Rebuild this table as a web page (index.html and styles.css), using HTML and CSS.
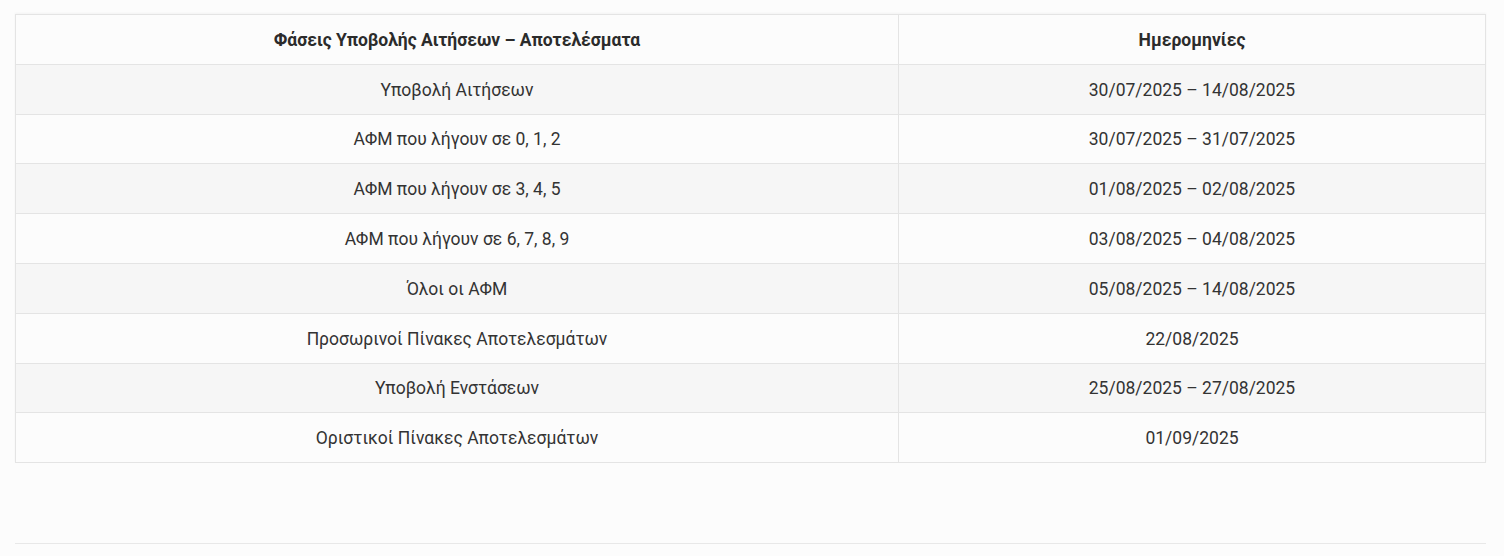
FILE: index.html
```html
<!DOCTYPE html>
<html lang="el">
<head>
    <meta charset="UTF-8">
    <meta name="viewport" content="width=device-width, initial-scale=1.0">
    <title>Φάσεις Υποβολής Αιτήσεων</title>
    <link rel="stylesheet" href="styles.css">
</head>
<body>

    <div class="content">
        <table class="phases">
            <thead>
                <tr>
                    <th class="col-phase">Φάσεις Υποβολής Αιτήσεων – Αποτελέσματα</th>
                    <th>Ημερομηνίες</th>
                </tr>
            </thead>
            <tbody>
                <tr><td>Υποβολή Αιτήσεων</td><td>30/07/2025 – 14/08/2025</td></tr>
                <tr><td>ΑΦΜ που λήγουν σε 0, 1, 2</td><td>30/07/2025 – 31/07/2025</td></tr>
                <tr><td>ΑΦΜ που λήγουν σε 3, 4, 5</td><td>01/08/2025 – 02/08/2025</td></tr>
                <tr><td>ΑΦΜ που λήγουν σε 6, 7, 8, 9</td><td>03/08/2025 – 04/08/2025</td></tr>
                <tr><td>Όλοι οι ΑΦΜ</td><td>05/08/2025 – 14/08/2025</td></tr>
                <tr><td>Προσωρινοί Πίνακες Αποτελεσμάτων</td><td>22/08/2025</td></tr>
                <tr><td>Υποβολή Ενστάσεων</td><td>25/08/2025 – 27/08/2025</td></tr>
                <tr><td>Οριστικοί Πίνακες Αποτελεσμάτων</td><td>01/09/2025</td></tr>
            </tbody>
        </table>
        <div class="separator"></div>
    </div>

</body>
</html>
```

FILE: styles.css
```css
body {
    margin: 0;
    background-color: #fcfcfc;
    font-family: Roboto, "Liberation Sans", sans-serif;
    color: #333;
}
.content {
    padding: 14px 18px 0 15px;
}
.phases {
    width: 100%;
    border-collapse: collapse;
    font-size: 17.5px;
    box-shadow: 0 -1px 2px rgba(0, 0, 0, 0.04);
}
.phases th,
.phases td {
    border: 1px solid #e4e4e4;
    text-align: center;
    height: 47.8px;
    padding: 1px 10px 0;
}
.phases th {
    font-weight: bold;
    color: #2b2b2b;
    background-color: #fcfcfc;
}
.phases .col-phase {
    width: 862px;
}
.phases tbody tr:nth-child(odd) td {
    background-color: #f6f6f6;
}
.phases tbody tr:nth-child(even) td {
    background-color: #fcfcfc;
}
.separator {
    margin-top: 80px;
    border-top: 1px solid #e8e8e8;
}
```
